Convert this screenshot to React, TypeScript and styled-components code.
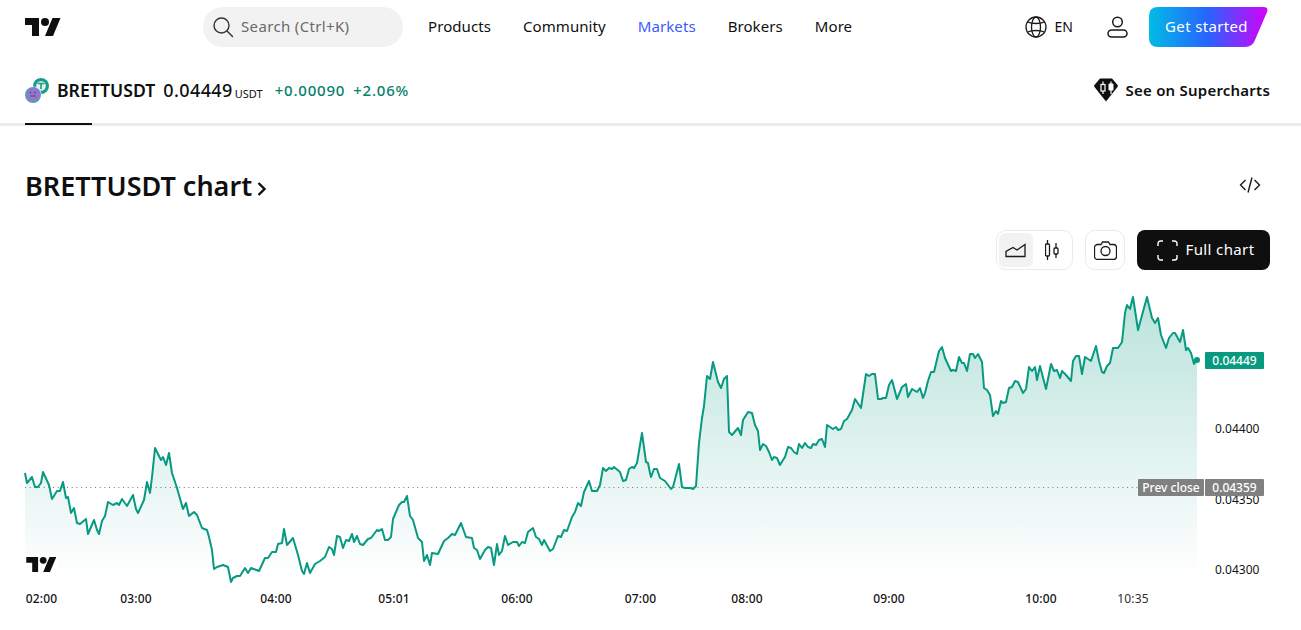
import React from 'react';
import styled, { createGlobalStyle } from 'styled-components';

const GlobalStyle = createGlobalStyle`
  html, body {
    margin: 0;
    padding: 0;
    background: #fff;
    overflow: hidden;
  }
  body {
    font-family: "Noto Sans", "Open Sans", sans-serif;
    color: #0f0f0f;
  }
`;

const Page = styled.div`
  width: 1301px;
  height: 630px;
  overflow: hidden;
`;

const Header = styled.header`
  display: flex;
  align-items: center;
  height: 40px;
  padding: 7px 33px 0 25px;
`;

const LogoLink = styled.a`
  display: flex;
  width: 178px;
  color: #0f0f0f;
`;

const Search = styled.div`
  display: flex;
  align-items: center;
  gap: 7px;
  width: 200px;
  height: 40px;
  padding-left: 9px;
  box-sizing: border-box;
  border-radius: 20px;
  background: #f2f2f2;
  color: #6a6a6a;
  font-size: 15px;
  letter-spacing: 0.35px;
`;

const SearchLabel = styled.span`
  margin-bottom: 2px;
`;

const Nav = styled.nav`
  display: flex;
  gap: 32px;
  margin: 0 0 2px 25px;
`;

const NavItem = styled.a<{ $active?: boolean }>`
  font-size: 15px;
  letter-spacing: 0.08px;
  color: ${p => (p.$active ? '#3d5afe' : '#0f0f0f')};
`;

const HeaderRight = styled.div`
  display: flex;
  align-items: center;
  margin-left: auto;
`;

const Lang = styled.div`
  display: flex;
  align-items: center;
  gap: 8px;
  font-size: 14px;
`;

const LangLabel = styled.span`
  margin-bottom: 2px;
`;

const UserButton = styled.div`
  display: flex;
  margin: 0 21px 0 34px;
`;

const GetStarted = styled.a`
  display: flex;
  align-items: center;
  justify-content: center;
  width: 119px;
  height: 40px;
  padding: 0 4px 2px 0;
  box-sizing: border-box;
  background: linear-gradient(90deg, #00bce5 0%, #2962ff 50%, #d500f9 100%);
  clip-path: path('M9 0H114Q120 0 118 5L106 33Q103.500 40 96 40H9Q0 40 0 31V9Q0 0 9 0Z');
  color: #fff;
  font-size: 15px;
  letter-spacing: 0.35px;
`;

const TickerRow = styled.div`
  display: flex;
  align-items: center;
  height: 76px;
  box-sizing: border-box;
  padding: 10px 31px 0 25px;
`;

const SymbolLogo = styled.svg`
  flex: none;
  margin-right: 8px;
`;

const Symbol = styled.span`
  font-size: 17.600px;
  font-weight: 600;
  margin-right: 8px;
`;

const Price = styled.span`
  font-size: 18px;
  font-weight: 500;
  letter-spacing: 0.4px;
`;

const Currency = styled.span`
  align-self: flex-end;
  margin: 0 12px 0 2px;
  padding-bottom: 22px;
  font-size: 11px;
`;

const Change = styled.span`
  font-size: 15px;
  font-weight: 500;
  color: #067f6b;
  margin-right: 8px;
  letter-spacing: 0.8px;
`;

const Supercharts = styled.a`
  display: flex;
  align-items: center;
  gap: 7px;
  margin-left: auto;
  font-size: 15px;
  font-weight: 600;
  letter-spacing: 0.22px;
`;

const TabBar = styled.div`
  height: 3px;
  background: #ebebeb;
`;

const ActiveTab = styled.div`
  width: 67px;
  height: 2px;
  margin-left: 25px;
  background: #0f0f0f;
`;

const TitleRow = styled.div`
  display: flex;
  align-items: center;
  justify-content: space-between;
  height: 40px;
  margin-top: 39px;
  padding: 0 40px 0 25px;
`;

const Title = styled.h2`
  display: flex;
  align-items: center;
  gap: 5px;
  margin: 0;
  font-size: 27px;
  font-weight: 600;
`;

const TitleChevron = styled.svg`
  margin-top: 7px;
`;

const Toolbar = styled.div`
  display: flex;
  justify-content: flex-end;
  gap: 12px;
  height: 40px;
  margin-top: 25px;
  padding-right: 31px;
`;

const ToolGroup = styled.div`
  display: flex;
  align-items: center;
  gap: 3px;
  padding: 2px;
  box-sizing: border-box;
  height: 40px;
  border: 1px solid #ebebeb;
  border-radius: 10px;
`;

const ToolButton = styled.div<{ $active?: boolean }>`
  display: flex;
  align-items: center;
  justify-content: center;
  width: 34px;
  height: 34px;
  border-radius: 6px;
  background: ${p => (p.$active ? '#f2f2f2' : 'transparent')};
`;

const FullChart = styled.a`
  display: flex;
  align-items: center;
  justify-content: center;
  gap: 8px;
  width: 133px;
  height: 40px;
  padding-left: 4px;
  box-sizing: border-box;
  border-radius: 8px;
  background: #0f0f0f;
  color: #fff;
  font-size: 15px;
  letter-spacing: 0.38px;
`;

const FullChartLabel = styled.span`
  margin-bottom: 2px;
`;

const ChartCanvas = styled.div`
  position: relative;
  height: 360px;
  font-size: 12px;
`;

const ChartSvg = styled.svg`
  display: block;
`;

const ChartLogo = styled.svg`
  position: absolute;
  left: 25px;
  top: 285px;
`;

const TimeLabel = styled.span<{ $x: number; $thin?: boolean }>`
  position: absolute;
  top: 320px;
  left: ${p => p.$x}px;
  transform: translateX(-50%);
  font-size: 12px;
  line-height: 18px;
  letter-spacing: 0.2px;
  font-weight: ${p => (p.$thin ? 400 : 500)};
  color: ${p => (p.$thin ? '#2e2e2e' : '#131313')};
`;

const AxisLabel = styled.span<{ $y: number }>`
  position: absolute;
  left: 1215px;
  top: ${p => p.$y}px;
  font-size: 12px;
  line-height: 16px;
  color: #131313;
`;

const PriceBadge = styled.span<{ $y: number; $bg: string; $x: number; $w: number }>`
  position: absolute;
  left: ${p => p.$x}px;
  top: ${p => p.$y}px;
  width: ${p => p.$w}px;
  height: 17px;
  border-radius: 1px;
  background: ${p => p.$bg};
  color: #fff;
  font-size: 12px;
  font-weight: 500;
  line-height: 17px;
  text-align: center;
`;

// traced from the picture, page coordinates
const points =
  '25,473 27,483 32,477 35,487 38,487 41,483 43,472 49,485 52,499 57,491 60,491 63,482 66,498 68,497 71,513 74,508 77,523 80,524 86,519 88,534 94,520 97,530 99,534 102,521 105,516 108,502 113,505 117,503 119,505 122,499 127,506 133,495 136,509 138,513 144,500 147,482 150,493 152,477 155,448 161,460 163,457 166,465 169,453 172,473 177,488 183,509 186,503 189,516 194,512 197,515 202,528 207,530 209,537 212,550 214,569 217,567 223,565 228,567 231,582 233,578 237,576 240,576 245,568 248,573 251,568 259,571 265,558 268,558 272,552 276,552 278,544 282,543 284,529 287,545 293,538 298,555 302,571 304,574 307,563 310,573 315,564 320,561 325,557 ' +
  '329,547 332,549 334,555 337,536 340,537 343,548 346,540 349,541 352,534 354,542 357,536 360,544 363,545 368,539 371,538 377,530 379,531 382,529 385,540 388,540 391,537 393,519 399,505 402,502 404,502 407,496 410,516 413,520 418,538 422,542 424,561 427,555 430,565 432,553 438,554 444,541 448,538 452,534 455,535 461,523 466,537 472,538 474,548 477,550 480,559 485,550 488,547 491,548 494,565 497,544 499,555 502,551 505,536 508,545 513,542 517,542 519,546 522,542 525,543 528,532 533,528 536,537 539,539 542,545 544,540 550,551 553,549 558,536 561,537 564,530 567,531 572,517 575,512 578,503 581,506 584,492 589,481 592,491 597,491 600,485 603,468 606,471 609,468 612,469 614,467 620,472 623,481 626,480 629,469 632,467 634,468 637,463 642,433 646,462 648,463 650,473 ' +
  '651,477 654,469 657,469 660,478 665,481 671,489 673,487 679,464 682,487 685,488 691,488 693,489 696,486 699,443 702,418 704,406 707,376 710,379 713,362 718,382 721,388 724,379 727,376 729,432 732,435 738,428 741,435 743,420 748,412 752,413 755,425 758,431 760,450 763,444 766,446 769,452 772,460 774,457 777,458 780,465 783,460 785,457 788,447 791,448 794,452 797,454 799,444 802,448 805,443 808,447 811,448 813,444 816,445 819,440 822,439 825,447 827,425 833,429 836,427 838,430 841,429 844,421 847,419 852,410 855,399 861,408 866,374 869,376 872,374 875,374 878,399 881,399 883,398 886,398 889,385 892,380 897,399 902,387 906,384 908,397 912,389 917,392 920,388 923,398 925,393 928,381 931,372 934,372 939,351 942,347 945,358 951,371 953,370 956,371 959,357 962,363 964,363 967,371 970,354 973,354 975,358 ' +
  '978,354 982,362 984,388 987,390 990,395 993,416 996,411 998,414 1001,401 1003,403 1006,402 1009,388 1012,387 1015,381 1018,382 1023,393 1026,389 1029,367 1032,371 1035,367 1037,380 1040,366 1046,389 1051,364 1054,371 1057,370 1060,378 1062,371 1066,375 1071,381 1073,361 1076,356 1079,356 1082,374 1085,357 1091,361 1096,346 1099,361 1102,372 1104,373 1107,366 1110,363 1113,348 1118,348 1122,342 1125,313 1127,305 1130,309 1133,297 1138,330 1147,297 1152,318 1155,323 1158,318 1161,335 1166,348 1169,338 1173,333 1175,333 1180,342 1183,330 1186,350 1188,348 1191,353 1194,364 1197,360';

const times = [
  { label: '02:00', x: 41.5 },
  { label: '03:00', x: 136 },
  { label: '04:00', x: 276 },
  { label: '05:01', x: 394 },
  { label: '06:00', x: 517 },
  { label: '07:00', x: 640.5 },
  { label: '08:00', x: 747 },
  { label: '09:00', x: 889 },
  { label: '10:00', x: 1041 },
];

const TvLogo = ({ width, height }: { width: number; height: number }) => (
  <svg width={width} height={height} viewBox="0 4 36 18" fill="currentColor">
    <path d="M14 22H7V11H0V4h14v18zM28 22h-8l7.500-18h8L28 22z" />
    <circle cx="20" cy="8" r="4" />
  </svg>
);

const App: React.FC = () => (
  <Page>
    <GlobalStyle />
    <Header>
      <LogoLink>
        <TvLogo width={36} height={18} />
      </LogoLink>
      <Search>
        <svg width="22" height="22" viewBox="0 0 22 22" fill="none" stroke="#333" strokeWidth="1.4">
          <circle cx="9.500" cy="9.500" r="7.500" />
          <path d="M15 15l5.500 5.500" strokeLinecap="round" />
        </svg>
        <SearchLabel>Search (Ctrl+K)</SearchLabel>
      </Search>
      <Nav>
        <NavItem>Products</NavItem>
        <NavItem>Community</NavItem>
        <NavItem $active>Markets</NavItem>
        <NavItem>Brokers</NavItem>
        <NavItem>More</NavItem>
      </Nav>
      <HeaderRight>
        <Lang>
          <svg width="22" height="22" viewBox="0 0 22 22" fill="none" stroke="#1a1a1a" strokeWidth="1.300">
            <circle cx="11" cy="11" r="10" />
            <ellipse cx="11" cy="11" rx="4.500" ry="10" />
            <path d="M2.500 6C7 8 15 8 19.500 6M2.500 16C7 14 15 14 19.500 16" />
          </svg>
          <LangLabel>EN</LangLabel>
        </Lang>
        <UserButton>
          <svg width="21" height="22" viewBox="0 0 21 22" fill="none" stroke="#1a1a1a" strokeWidth="1.500">
            <circle cx="10.500" cy="6" r="4.800" />
            <rect x="1" y="14" width="19" height="7" rx="3.500" />
          </svg>
        </UserButton>
        <GetStarted>Get started</GetStarted>
      </HeaderRight>
    </Header>
    <TickerRow>
      <SymbolLogo width="24" height="25" viewBox="0 0 24 25">
        <circle cx="16" cy="8" r="8" fill="#1c9c8c" />
        <circle cx="16" cy="8" r="4.800" fill="#e6f4f1" />
        <path d="M12.500 5.500h7M16 5.500v5.500" stroke="#1c9c8c" strokeWidth="1.600" />
        <circle cx="8" cy="17" r="8.500" fill="#fff" />
        <circle cx="8" cy="17" r="8" fill="#6a92bd" />
        <circle cx="9" cy="15.500" r="6" fill="#8a78d4" />
        <path d="M5.500 14v1M10 14v1" stroke="#2d3b66" strokeWidth="1.400" />
        <path d="M5 18h6" stroke="#b8415a" strokeWidth="1.600" />
      </SymbolLogo>
      <Symbol>BRETTUSDT</Symbol>
      <Price>0.04449</Price>
      <Currency>USDT</Currency>
      <Change>+0.00090</Change>
      <Change>+2.06%</Change>
      <Supercharts>
        <svg width="26" height="24" viewBox="0 0 26 24">
          <path d="M7 .500h12l6 7-.500 1.500L13 23.500 1.500 9 1 7.500z" fill="#0f0f0f" />
          <path d="M10 3.500v12.500M18 3.500v12.500" stroke="#fff" strokeWidth="1.200" />
          <rect x="8" y="6.500" width="4" height="6.500" fill="#0f0f0f" stroke="#fff" strokeWidth="1.200" />
          <rect x="15.500" y="5.500" width="5" height="7" rx="1" fill="#fff" />
        </svg>
        See on Supercharts
      </Supercharts>
    </TickerRow>
    <TabBar>
      <ActiveTab />
    </TabBar>
    <TitleRow>
      <Title>
        BRETTUSDT chart
        <TitleChevron width="10" height="16" viewBox="0 0 10 16" fill="none" stroke="#0f0f0f" strokeWidth="2.400">
          <path d="M1.500 2l6 6-6 6" />
        </TitleChevron>
      </Title>
      <svg width="22" height="18" viewBox="0 0 22 18" fill="none" stroke="#1a1a1a" strokeWidth="1.400">
        <path d="M6.500 4L1.500 9l5 5M15.500 4l5 5-5 5M13 1.500L9 16.500" />
      </svg>
    </TitleRow>
    <Toolbar>
      <ToolGroup>
        <ToolButton $active>
          <svg width="22" height="16" viewBox="0 0 22 16" fill="none" stroke="#1a1a1a" strokeWidth="1.300">
            <path d="M1 14.500V9.500l7-4 4 2.500 8-5.500v12z" />
          </svg>
        </ToolButton>
        <ToolButton>
          <svg width="16" height="22" viewBox="1 0 16 22" fill="none" stroke="#1a1a1a" strokeWidth="1.300">
            <rect x="1.500" y="5" width="4" height="12" rx="1" />
            <path d="M3.500 1v4M3.500 17v4M12 4v5M12 15v4" />
            <rect x="10" y="9" width="4" height="6" rx="1" />
          </svg>
        </ToolButton>
      </ToolGroup>
      <ToolGroup>
        <ToolButton>
          <svg width="23" height="19" viewBox="0 0 23 19" fill="none" stroke="#1a1a1a" strokeWidth="1.300">
            <path d="M3.500 3.500H7L8.500 1h6L16 3.500h3.500a3 3 0 0 1 3 3v9a3 3 0 0 1-3 3h-16a3 3 0 0 1-3-3v-9a3 3 0 0 1 3-3z" />
            <circle cx="11.500" cy="10" r="4.500" />
          </svg>
        </ToolButton>
      </ToolGroup>
      <FullChart>
        <svg width="21" height="21" viewBox="0 0 21 21" fill="none" stroke="#fff" strokeWidth="1.400">
          <path d="M1 6V3.500A2.500 2.500 0 0 1 3.500 1H6M15 1h2.500A2.500 2.500 0 0 1 20 3.500V6M20 15v2.500a2.500 2.500 0 0 1-2.500 2.500H15M6 20H3.500A2.500 2.500 0 0 1 1 17.500V15" />
        </svg>
        <FullChartLabel>Full chart</FullChartLabel>
      </FullChart>
    </Toolbar>
    <ChartCanvas>
      <ChartSvg width="1301" height="360" viewBox="0 270 1301 360">
        <defs>
          <linearGradient id="area" x1="0" y1="296" x2="0" y2="578" gradientUnits="userSpaceOnUse">
            <stop offset="0" stopColor="#089981" stopOpacity="0.28" />
            <stop offset="1" stopColor="#089981" stopOpacity="0" />
          </linearGradient>
        </defs>
        <polygon points={`25,578 ${points} 1197,578`} fill="url(#area)" />
        <line x1="25" y1="487.500" x2="1138" y2="487.500" stroke="#777" strokeDasharray="1 3.670" />
        <polyline points={points} fill="none" stroke="#089981" strokeWidth="2" strokeLinejoin="round" />
        <circle cx="1197" cy="360" r="3" fill="#089981" />
      </ChartSvg>
      <ChartLogo width="33" height="19" viewBox="-1.500 2.500 39 21">
        <rect x="-1.500" y="2.500" width="39" height="21" fill="#fff" />
        <path d="M14 22H7V11H0V4h14v18zM28 22h-8l7.500-18h8L28 22z" fill="#0f0f0f" />
        <circle cx="20" cy="8" r="4" fill="#0f0f0f" />
      </ChartLogo>
      {times.map(t => (
        <TimeLabel key={t.label} $x={t.x}>
          {t.label}
        </TimeLabel>
      ))}
      <TimeLabel $x={1133} $thin>
        10:35
      </TimeLabel>
      <AxisLabel $y={150.500}>0.04400</AxisLabel>
      <AxisLabel $y={222}>0.04350</AxisLabel>
      <AxisLabel $y={292}>0.04300</AxisLabel>
      <PriceBadge $x={1205} $y={82} $w={59} $bg="#089981">
        0.04449
      </PriceBadge>
      <PriceBadge $x={1138} $y={209} $w={66} $bg="#808080">
        Prev close
      </PriceBadge>
      <PriceBadge $x={1205} $y={209} $w={59} $bg="#808080">
        0.04359
      </PriceBadge>
    </ChartCanvas>
  </Page>
);

export default App;
